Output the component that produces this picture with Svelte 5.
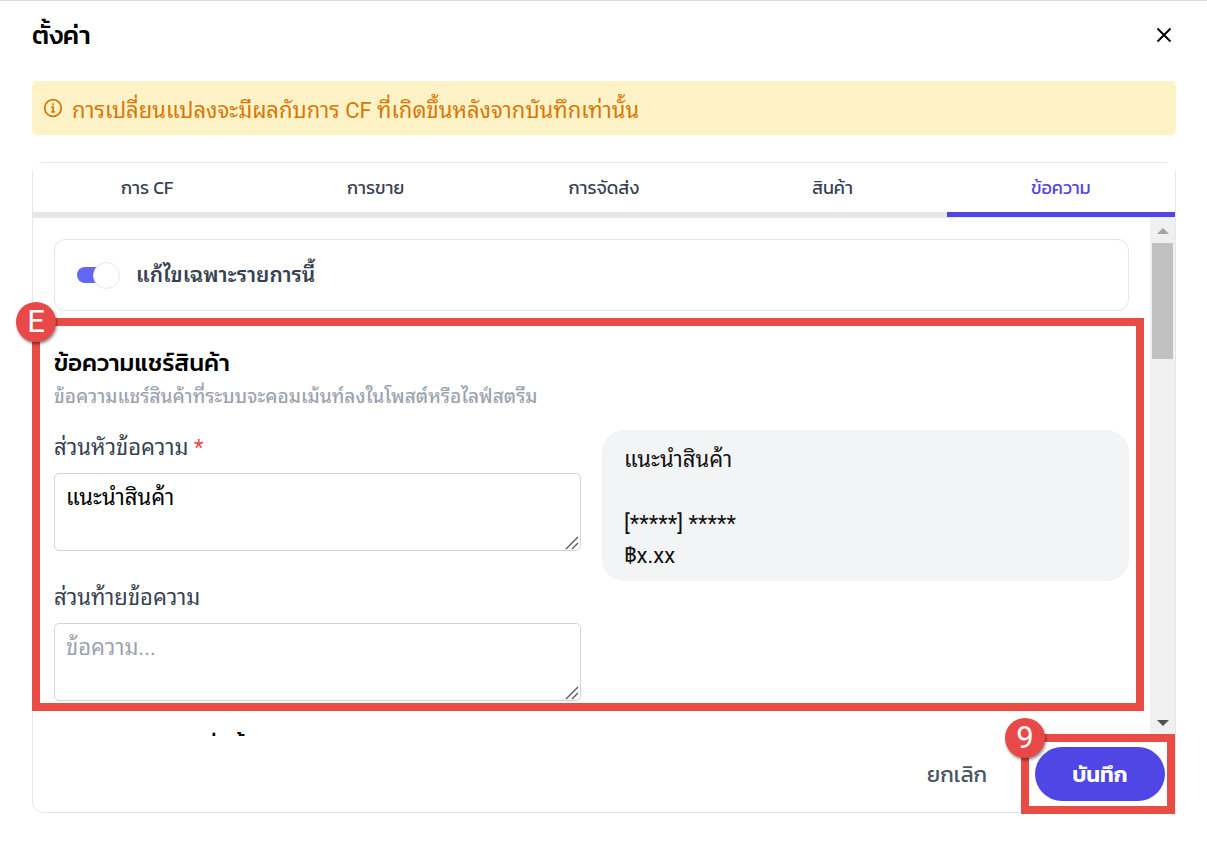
<script>
  const tabs = ['การ CF', 'การขาย', 'การจัดส่ง', 'สินค้า', 'ข้อความ'];
  let activeTab = 'ข้อความ';
  let customize = true;
  let header = 'แนะนำสินค้า';
  let footer = '';
</script>

<main class="dialog">
  <header class="title-bar">
    <h1>ตั้งค่า</h1>
    <button class="close" type="button" aria-label="ปิด">
      <svg width="16" height="16" viewBox="0 0 16 16">
        <path d="M1.5 1.5l13 13M14.5 1.5l-13 13" />
      </svg>
    </button>
  </header>

  <div class="notice">
    <svg width="20" height="20" viewBox="0 0 20 20">
      <circle cx="10" cy="10" r="8.3" />
      <path d="M8.3 9.2h1.9v4.6M8.2 13.9h3.9" />
      <path d="M9.2 6.2h1.6" class="dot" />
    </svg>
    <span>การเปลี่ยนแปลงจะมีผลกับการ CF ที่เกิดขึ้นหลังจากบันทึกเท่านั้น</span>
  </div>

  <div class="card">
    <nav class="tabs">
      {#each tabs as tab}
        <button
          type="button"
          class="tab"
          class:active={tab === activeTab}
          on:click={() => (activeTab = tab)}
        >
          {tab}
        </button>
      {/each}
    </nav>

    <div class="body">
      <div class="scroll-area">
        <label class="customize">
          <input type="checkbox" class="switch" bind:checked={customize} />
          <span>แก้ไขเฉพาะรายการนี้</span>
        </label>

        <section class="share">
          <h2>ข้อความแชร์สินค้า</h2>
          <p class="hint">ข้อความแชร์สินค้าที่ระบบจะคอมเม้นท์ลงในโพสต์หรือไลฟ์สตรีม</p>
          <div class="columns">
            <div class="fields">
              <div class="field">
                <label for="msg-header">ส่วนหัวข้อความ <em>*</em></label>
                <div class="area">
                  <textarea id="msg-header" bind:value={header}></textarea>
                  <svg class="grip" width="14" height="14" viewBox="0 0 14 14">
                    <path d="M1 13L13 1M7 13L13 7" />
                  </svg>
                </div>
              </div>
              <div class="field">
                <label for="msg-footer">ส่วนท้ายข้อความ</label>
                <div class="area">
                  <textarea
                    id="msg-footer"
                    placeholder="ข้อความ..."
                    bind:value={footer}
                  ></textarea>
                  <svg class="grip" width="14" height="14" viewBox="0 0 14 14">
                    <path d="M1 13L13 1M7 13L13 7" />
                  </svg>
                </div>
              </div>
            </div>
            <div class="preview">
              <p>{header}</p>
              <p class="blank"></p>
              <p>[*****] *****</p>
              <p>฿x.xx</p>
            </div>
          </div>
        </section>

        <section>
          <h2>ข้อความสรุปคำสั่งซื้อ</h2>
        </section>
      </div>

      <div class="scrollbar">
        <svg width="12" height="6" viewBox="0 0 12 6">
          <path d="M6 0l6 6H0z" fill="#a3a3a3" />
        </svg>
        <div class="thumb"></div>
        <svg width="12" height="6" viewBox="0 0 12 6">
          <path d="M0 0h12L6 6z" fill="#505050" />
        </svg>
      </div>

      <div class="mark mark-section">
        <span class="badge">E</span>
      </div>
    </div>

    <footer class="actions">
      <button type="button" class="cancel">ยกเลิก</button>
      <div class="save-wrap">
        <button type="button" class="save">บันทึก</button>
        <div class="mark mark-save">
          <span class="badge">9</span>
        </div>
      </div>
    </footer>
  </div>
</main>

<style>
  :global(body) {
    background: #fff;
  }

  .dialog {
    --ui: Kanit, Prompt, 'Noto Sans Thai UI', 'Noto Sans Thai', 'Noto Sans',
      sans-serif;
    display: flex;
    flex-direction: column;
    box-sizing: border-box;
    height: 100vh;
    min-height: 640px;
    padding: 0 31px 41px 32px;
    border-top: 1px solid #dcdcdc;
    font-family: Roboto, 'Leelawadee UI', 'Noto Sans Thai Looped',
      'Noto Looped Thai', Loma, Waree, Garuda, Umpush, sans-serif;
    font-size: 22px;
    color: #374151;
  }

  h1,
  h2,
  p {
    margin: 0;
  }

  button,
  textarea {
    font-family: inherit;
  }

  button {
    border: none;
    background: none;
    padding: 0;
    cursor: pointer;
  }

  .title-bar {
    display: flex;
    justify-content: space-between;
    align-items: center;
    flex: none;
    height: 68px;
    margin-bottom: 12px;
  }

  h1 {
    font-family: var(--ui);
    font-size: 26px;
    font-weight: 500;
    line-height: 36px;
    color: #000;
  }

  .close {
    display: flex;
    padding: 4px;
  }

  .close svg {
    stroke: #000;
    stroke-width: 2;
    fill: none;
  }

  .notice {
    display: flex;
    align-items: center;
    gap: 9px;
    flex: none;
    height: 54px;
    margin-bottom: 27px;
    padding: 0 11px;
    border-radius: 5px;
    background: #fef3c7;
    color: #d97706;
  }

  .notice svg {
    flex: none;
    stroke: #d97706;
    stroke-width: 1.8;
    fill: none;
  }

  .notice .dot {
    stroke-width: 2;
  }

  .card {
    display: flex;
    flex-direction: column;
    flex: 1;
    min-height: 0;
    border: 1px solid #e5e7eb;
    border-radius: 11px;
  }

  .tabs {
    display: flex;
    flex: none;
    background: #fff;
    border-bottom: 1px solid #e5e7eb;
  }

  .tab {
    flex: 1;
    height: 54px;
    border-bottom: 5px solid #e5e7eb;
    font-family: var(--ui);
    font-size: 18px;
    color: #374151;
  }

  .tab.active {
    border-color: #4f46e5;
    color: #4f46e5;
  }

  .body {
    position: relative;
    display: flex;
    flex: 1;
    min-height: 0;
  }

  .scroll-area {
    flex: 1;
    overflow: hidden;
    padding: 21px 21px 0;
  }

  .customize {
    display: flex;
    align-items: center;
    gap: 16px;
    box-sizing: border-box;
    height: 72px;
    padding: 0 22px;
    margin-bottom: 34px;
    border: 1px solid #e5e7eb;
    border-radius: 11px;
    font-size: 21px;
    font-weight: 600;
    line-height: 24px;
  }

  .switch {
    appearance: none;
    position: relative;
    flex: none;
    width: 43px;
    height: 27px;
    margin: 0;
  }

  .switch::before {
    content: '';
    position: absolute;
    inset: 5px 1px 6px 0;
    border-radius: 8px;
    background: #d1d5db;
  }

  .switch:checked::before {
    background: #6366f1;
  }

  .switch::after {
    content: '';
    position: absolute;
    box-sizing: border-box;
    top: 0;
    left: 0;
    width: 27px;
    height: 27px;
    border: 1px solid #e5e7eb;
    border-radius: 50%;
    background: #fff;
  }

  .switch:checked::after {
    left: auto;
    right: 0;
  }

  .share {
    margin-bottom: 29px;
  }

  h2 {
    font-family: var(--ui);
    font-size: 24px;
    font-weight: 500;
    line-height: 36px;
    color: #000;
  }

  .hint {
    margin-bottom: 17px;
    font-size: 19px;
    font-weight: 500;
    line-height: 32px;
    color: #9ca3af;
  }

  .columns {
    display: grid;
    grid-template-columns: 1fr 1fr;
    align-items: start;
    gap: 21px;
  }

  .fields {
    display: grid;
    gap: 29px;
  }

  .field label {
    display: block;
    height: 43px;
    line-height: 36px;
  }

  .field em {
    font-style: normal;
    color: #ef4444;
  }

  .area {
    position: relative;
    display: flex;
  }

  textarea {
    box-sizing: border-box;
    width: 100%;
    height: 78px;
    padding: 8px 11px;
    border: 1px solid #d1d5db;
    border-radius: 5px;
    resize: none;
    overflow: hidden;
    font-size: 22px;
    line-height: 32px;
    color: #000;
  }

  textarea::placeholder {
    color: #9ca3af;
  }

  .grip {
    position: absolute;
    right: 2px;
    bottom: 1px;
    stroke: #555;
    stroke-width: 1.3;
    fill: none;
  }

  .preview {
    padding: 14px 22px 9px;
    border-radius: 22px;
    background: #f3f4f6;
    color: #111;
    line-height: 32px;
  }

  .blank {
    height: 32px;
  }

  .scrollbar {
    display: flex;
    flex-direction: column;
    align-items: center;
    box-sizing: border-box;
    flex: none;
    width: 25px;
    padding: 10px 0;
    background: #f0f0f0;
  }

  .thumb {
    width: 21px;
    height: 116px;
    margin: 9px 0 auto;
    background: #c1c1c1;
  }

  .mark {
    position: absolute;
    border: 8px solid #e94b45;
    pointer-events: none;
  }

  .mark-section {
    inset: 100px 31px 25px -1px;
  }

  .mark-save {
    inset: -13px -10px -13px -14px;
  }

  .badge {
    position: absolute;
    top: -24px;
    left: -24px;
    width: 40px;
    height: 40px;
    border-radius: 50%;
    background: #e94848;
    box-shadow: 1px 2px 3px rgba(0, 0, 0, 0.45);
    font-family: Roboto, sans-serif;
    font-size: 31px;
    line-height: 40px;
    text-align: center;
    color: #fff;
  }

  .actions {
    display: flex;
    justify-content: flex-end;
    align-items: center;
    gap: 48px;
    flex: none;
    height: 76px;
    padding-right: 10px;
  }

  .cancel,
  .save {
    font-family: var(--ui);
    font-size: 22px;
    color: #4b5563;
  }

  .save-wrap {
    position: relative;
  }

  .save {
    display: block;
    width: 130px;
    height: 54px;
    border-radius: 27px;
    background: #4f46e5;
    font-weight: 600;
    color: #fff;
  }
</style>
